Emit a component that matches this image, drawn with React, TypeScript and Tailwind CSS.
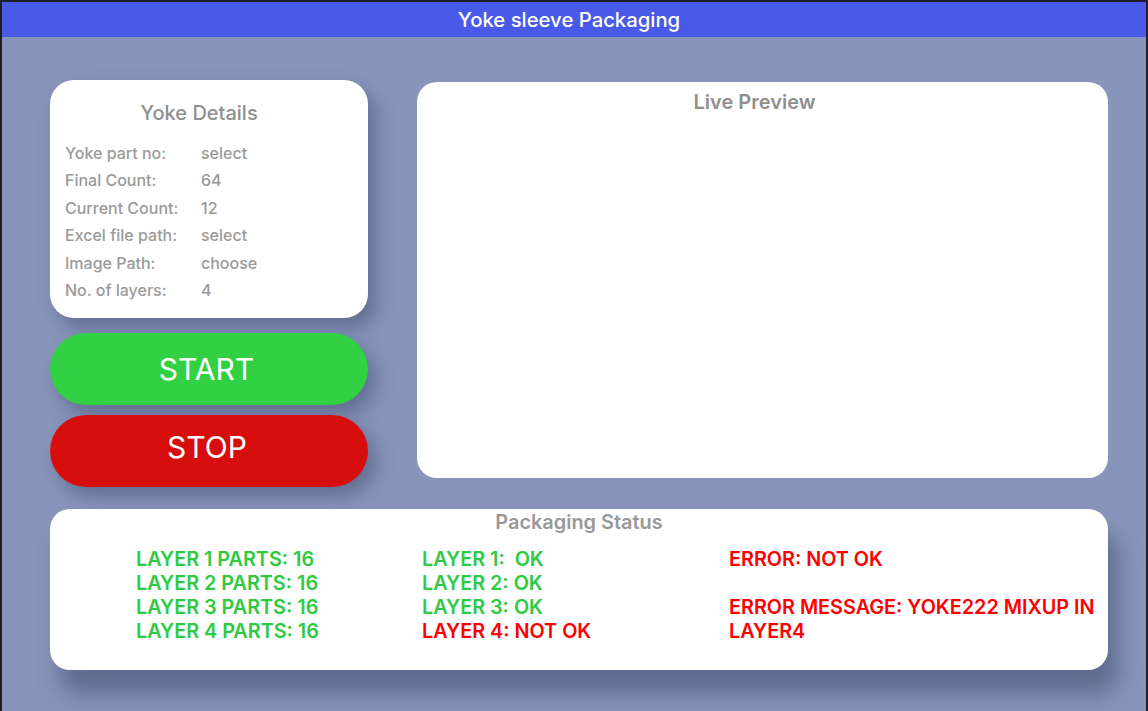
import React from "react";

const rows: [string, string][] = [
  ["Yoke part no:", "select"],
  ["Final Count:", "64"],
  ["Current Count:", "12"],
  ["Excel file path:", "select"],
  ["Image Path:", "choose"],
  ["No. of layers:", "4"],
];

export default function App() {
  return (
    <div
      className="w-[1148px] h-[711px] overflow-hidden bg-[#8894ba] border-t-2 border-x-2 border-[#1f1f25] flex flex-col"
      style={{ fontFamily: "Inter, 'Noto Sans', sans-serif" }}
    >
      <div className="h-[35px] shrink-0 bg-[#4a5ae8] flex items-center justify-center pr-[10px] pt-[2px] text-white text-[20.3px] font-medium">
        Yoke sleeve Packaging
      </div>

      <div className="flex flex-col pl-[48px] pr-[38px] pt-[43px]">
        <div className="flex items-start gap-[49px]">
          <div className="w-[318px] shrink-0 flex flex-col">
            <div className="h-[238px] bg-white rounded-[24px] shadow-[8px_10px_18px_rgba(70,80,115,0.55)] pl-[15px] pr-[15px] pt-[20px]">
              <div className="text-center pr-[20px] text-[20px] font-medium text-[#8f8f8f] leading-[26px]">
                Yoke Details
              </div>
              <div className="mt-[13px] flex flex-col">
                {rows.map(([k, v]) => (
                  <div key={k} className="flex h-[27.5px] items-center text-[16px] font-medium text-[#9a9a9a]">
                    <span className="w-[136px]">{k}</span>
                    <span>{v}</span>
                  </div>
                ))}
              </div>
            </div>
            <button className="mt-[15px] h-[72px] rounded-full bg-[#32d144] text-white text-[30px] font-normal shadow-[8px_10px_18px_rgba(70,80,115,0.55)] flex items-center justify-center pr-[5px]">
              START
            </button>
            <button className="mt-[10px] h-[72px] rounded-full bg-[#d70e0e] text-white text-[30px] font-normal shadow-[8px_10px_18px_rgba(70,80,115,0.55)] flex items-center justify-center pr-[4px] pb-[8px]">
              STOP
            </button>
          </div>

          <div className="mt-[2px] flex-1 h-[396px] bg-white rounded-[20px] pt-[8px]">
            <div className="text-center pr-[16px] text-[20px] font-semibold text-[#8f8f8f] leading-[24px]">
              Live Preview
            </div>
          </div>
        </div>

        <div className="mt-[22px] h-[161px] bg-white rounded-[20px] shadow-[10px_24px_22px_rgba(70,80,115,0.6)] pt-[1px]">
          <div className="text-center text-[19.9px] font-semibold text-[#999999] leading-[24px]">
            Packaging Status
          </div>
          <div className="mt-[13px] flex text-[19.8px] font-semibold leading-[24px]">
            <div className="w-[372px] pl-[86px] text-[#2ecb41]">
              <div>LAYER 1 PARTS: 16</div>
              <div>LAYER 2 PARTS: 16</div>
              <div>LAYER 3 PARTS: 16</div>
              <div>LAYER 4 PARTS: 16</div>
            </div>
            <div className="w-[307px]">
              <div className="text-[#2ecb41] whitespace-pre">LAYER 1:  OK</div>
              <div className="text-[#2ecb41]">LAYER 2: OK</div>
              <div className="text-[#2ecb41]">LAYER 3: OK</div>
              <div className="text-[#ff0000]">LAYER 4: NOT OK</div>
            </div>
            <div className="text-[#ff0000] whitespace-nowrap">
              <div>ERROR: NOT OK</div>
              <div>&nbsp;</div>
              <div>ERROR MESSAGE: YOKE222 MIXUP IN</div>
              <div>LAYER4</div>
            </div>
          </div>
        </div>
      </div>
    </div>
  );
}
